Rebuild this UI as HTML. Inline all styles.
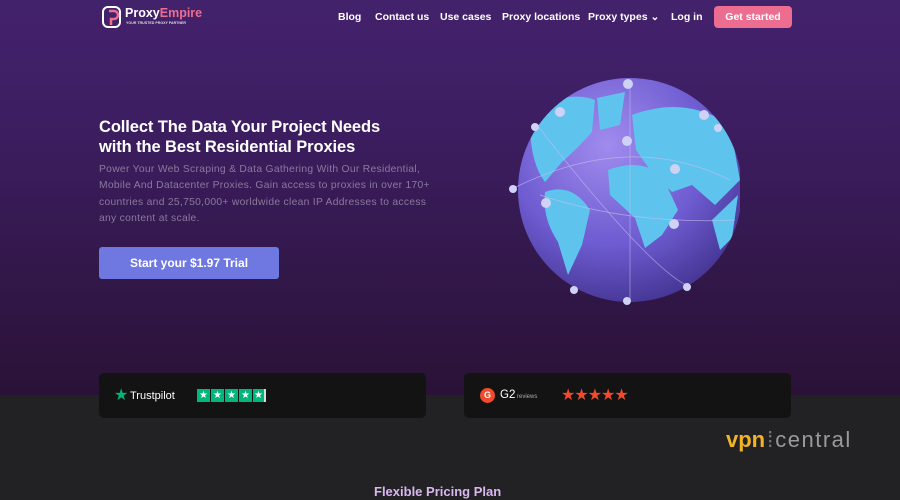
<!DOCTYPE html>
<html><head><meta charset="utf-8"><style>
*{margin:0;padding:0;box-sizing:border-box}
body{width:900px;height:500px;overflow:hidden;font-family:"Liberation Sans",sans-serif;background:#222224;position:relative}
.hero{position:absolute;left:0;top:0;width:900px;height:395px;background:linear-gradient(180deg,#43226c 0%,#3d1e62 30%,#33184c 65%,#2a1236 100%)}
.nav a{position:absolute;top:11px;color:#fff;font-size:10.5px;font-weight:bold;text-decoration:none}
.btn{position:absolute;left:714px;top:6px;width:78px;height:22px;background:#ec6d8f;border-radius:4px;color:#fff;font-size:10.5px;font-weight:bold;text-align:center;line-height:22px}
h1{position:absolute;left:99px;top:117px;color:#fff;font-size:16.5px;line-height:20px;font-weight:bold;letter-spacing:-0.1px}
p.sub{position:absolute;left:99px;top:162px;width:345px;color:#8a7a9c;font-size:10.3px;line-height:16.3px;letter-spacing:0.3px}
.trial{position:absolute;left:99px;top:247px;width:180px;height:32px;background:#6f78e0;border-radius:3px;color:#fff;font-size:12px;font-weight:bold;text-align:center;line-height:32px}
.card{position:absolute;top:373px;width:327px;height:45px;background:#131313;border-radius:5px}
.pp{position:absolute;left:374px;top:484px;color:#d9b8ef;font-size:13px;font-weight:bold}
</style></head><body>
<div class="hero"></div>
<svg style="position:absolute;left:102px;top:6px" width="20" height="22" viewBox="0 0 20 22"><rect x="1" y="1" width="17" height="20" rx="5" fill="none" stroke="#fff" stroke-width="2"/><path d="M7 5h5a4 4 0 0 1 0 8h-3v6" fill="none" stroke="#ec6d8f" stroke-width="2.5"/></svg>
<div style="position:absolute;left:125px;top:6px;color:#fff;font-size:12.5px;font-weight:bold">Proxy<span style="color:#ec6d8f">Empire</span></div>
<div style="position:absolute;left:126px;top:21px;color:#ddd;font-size:3.6px;font-weight:bold">YOUR TRUSTED PROXY PARTNER</div>
<div class="nav">
<a style="left:338px">Blog</a><a style="left:375px">Contact us</a><a style="left:440px">Use cases</a><a style="left:502px">Proxy locations</a><a style="left:588px">Proxy types ⌄</a><a style="left:671px">Log in</a>
</div>
<div class="btn">Get started</div>
<h1>Collect The Data Your Project Needs<br>with the Best Residential Proxies</h1>
<p class="sub">Power Your Web Scraping &amp; Data Gathering With Our Residential, Mobile And Datacenter Proxies. Gain access to proxies in over 170+ countries and 25,750,000+ worldwide clean IP Addresses to access any content at scale.</p>
<div class="trial">Start your $1.97 Trial</div>
<svg style="position:absolute;left:500px;top:70px" width="240" height="240" viewBox="0 0 240 240">
<defs><radialGradient id="g" cx="40%" cy="30%" r="75%"><stop offset="0" stop-color="#a08cee"/><stop offset="0.6" stop-color="#6d5bd0"/><stop offset="1" stop-color="#42338f"/></radialGradient><clipPath id="c"><circle cx="130" cy="120" r="112"/></clipPath></defs>
<circle cx="130" cy="120" r="112" fill="url(#g)"/>
<g clip-path="url(#c)" fill="#5ec4ee">
<path d="M30 40 Q70 20 95 30 L92 62 Q78 78 62 92 L45 112 Q28 90 30 40Z"/>
<path d="M97 28 L125 22 L120 55 L100 60Z"/>
<path d="M45 122 Q72 112 90 140 L82 175 L68 205 L58 172 Q42 148 45 122Z"/>
<path d="M132 45 Q185 25 230 55 L240 110 L215 135 L192 115 L172 122 L150 100 L136 80Z"/>
<path d="M108 100 Q140 88 162 105 L178 140 L162 165 L145 178 L135 148 L110 125Z"/>
<path d="M212 150 L238 125 L232 168 L220 180Z"/>
</g>
<g stroke="#c8c0f0" stroke-width="0.7" fill="none" opacity="0.7"><path d="M14 118 Q130 60 230 110"/><path d="M40 125 Q130 155 235 150"/><path d="M130 13 L130 230"/><path d="M37 55 Q150 200 190 217"/></g>
<g fill="#cfd2f5"><circle cx="128" cy="14" r="5"/><circle cx="60" cy="42" r="5"/><circle cx="35" cy="57" r="4"/><circle cx="13" cy="119" r="4"/><circle cx="46" cy="133" r="5"/><circle cx="127" cy="71" r="5"/><circle cx="175" cy="99" r="5"/><circle cx="204" cy="45" r="5"/><circle cx="218" cy="58" r="4"/><circle cx="174" cy="154" r="5"/><circle cx="74" cy="220" r="4"/><circle cx="127" cy="231" r="4"/><circle cx="187" cy="217" r="4"/></g>
</svg>
<div class="card" style="left:99px"></div>
<div class="card" style="left:464px"></div>
<div style="position:absolute;left:114px;top:385px;color:#00b67a;font-size:16px">★</div>
<div style="position:absolute;left:130px;top:390px;color:#fff;font-size:11px">Trustpilot</div>
<div style="position:absolute;left:197px;top:389px;display:flex;gap:1px">
<span style="width:13px;height:13px;background:#00b67a;color:#fff;font-size:10px;text-align:center;line-height:13px">★</span><span style="width:13px;height:13px;background:#00b67a;color:#fff;font-size:10px;text-align:center;line-height:13px">★</span><span style="width:13px;height:13px;background:#00b67a;color:#fff;font-size:10px;text-align:center;line-height:13px">★</span><span style="width:13px;height:13px;background:#00b67a;color:#fff;font-size:10px;text-align:center;line-height:13px">★</span><span style="width:13px;height:13px;background:#00b67a;color:#fff;font-size:10px;text-align:center;line-height:13px;border-right:2px solid #ddd">★</span></div>
<div style="position:absolute;left:480px;top:388px;width:15px;height:15px;border-radius:50%;background:#ef4b2c;color:#fff;font-size:9px;font-weight:bold;text-align:center;line-height:15px">G</div>
<div style="position:absolute;left:500px;top:389px;color:#fff;font-size:11.5px">G2<span style="font-size:6px;color:#aaa"> reviews</span></div>
<div style="position:absolute;left:561px;top:385px;color:#ef4b2c;font-size:16px;letter-spacing:-1px">★★★★★</div>
<div style="position:absolute;left:726px;top:427px;font-size:22px;line-height:26px"><span style="color:#f2b424;font-weight:bold">vpn</span><span style="color:#777;margin:0 2px">⁞</span><span style="color:#9a9a9a;letter-spacing:1.5px">central</span></div>
<div class="pp">Flexible Pricing Plan</div>
</body></html>
